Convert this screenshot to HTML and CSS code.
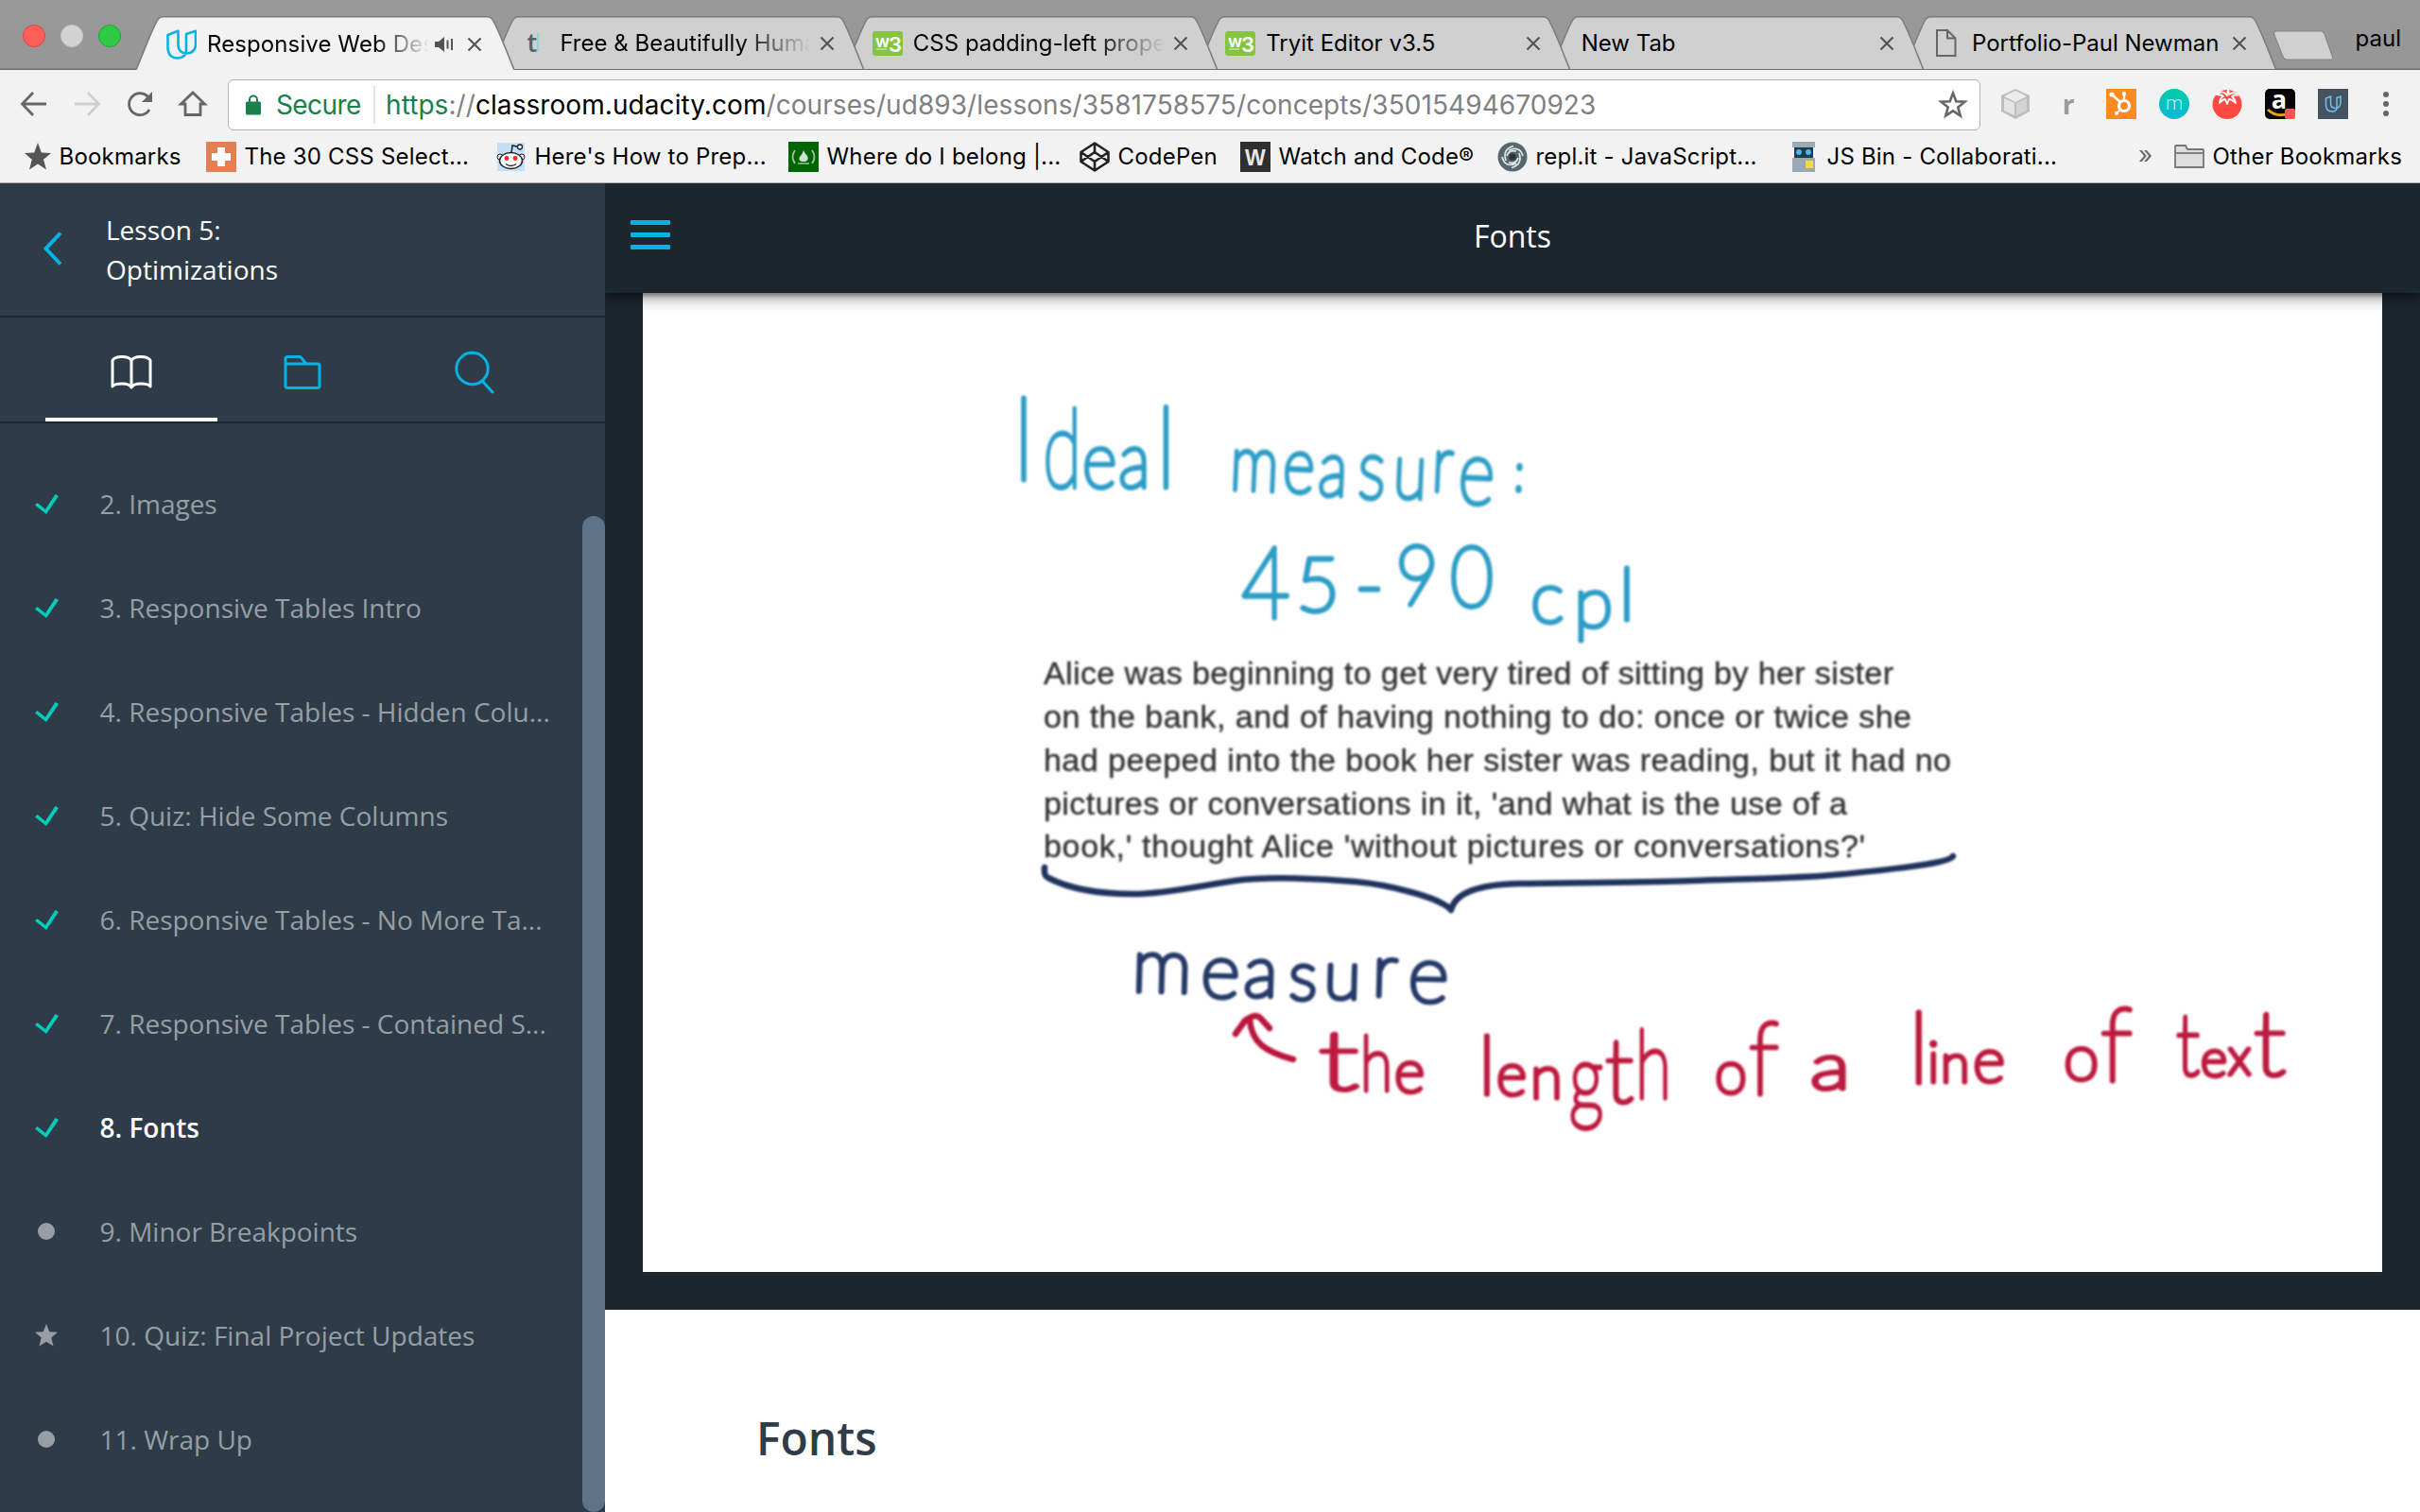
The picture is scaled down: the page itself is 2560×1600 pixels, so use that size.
FILE: index.html
```html
<!DOCTYPE html>
<html lang="en">
<head>
<meta charset="utf-8">
<title>Fonts - Responsive Web Design</title>
<link rel="stylesheet" href="styles.css">
</head>
<body>
<svg class="defs" width="0" height="0" aria-hidden="true">
  <symbol id="tab-shape" viewBox="0 0 400 57"><path class="tab-fill" d="M0 57C4 48 20 5 24 2.500Q25.500 .8 29 .8H371Q374.500 .8 376 2.500C380 5 396 48 400 57Z"/><path class="tab-line" d="M0 57C4 48 20 5 24 2.500Q25.500 .8 29 .8H371Q374.500 .8 376 2.500C380 5 396 48 400 57" fill="none"/></symbol>
  <symbol id="close" viewBox="0 0 16 16"><path d="M1.500 1.500l13 13M14.500 1.500l-13 13" stroke="#555" stroke-width="2.200" fill="none"/></symbol>
  <symbol id="check" viewBox="0 0 25 21"><path d="M0 11.500l2.500-2.500 8.500 7L21.500 0 25 2 12 21z" fill="#02ccba"/></symbol>
</svg>

<header class="browser">
  <div class="strip">
    <div class="lights"><i class="red"></i><i class="grey"></i><i class="green"></i></div>
    <div class="tabs">
      <div class="tab active"><svg class="shape"><use href="#tab-shape"/></svg>
        <svg class="fav" viewBox="0 0 32 32" fill="none" stroke="#02b3e4" stroke-width="2.600" stroke-linejoin="round"><path d="M12.500 19V1.800L1.500 6v13.500Q2 30.500 12 30.500 21 30 21 22V5l10-3.200V17q-1 8.500-10 8.500M12.500 17q.5 8 8.500 8.500"/></svg>
        <span class="title t-short">Responsive Web Des</span>
        <svg class="sound" viewBox="0 0 20 16"><path d="M0 5h4l6-5v16l-6-5H0z" fill="#555"/><path d="M13.500 3.500v9M18 2v12" stroke="#555" stroke-width="2"/></svg>
        <svg class="x"><use href="#close"/></svg></div>
      <div class="tab"><svg class="shape"><use href="#tab-shape"/></svg>
        <span class="fav tt">t<b></b></span>
        <span class="title fade">Free &amp; Beautifully Huma</span><svg class="x"><use href="#close"/></svg></div>
      <div class="tab"><svg class="shape"><use href="#tab-shape"/></svg>
        <svg class="fav" viewBox="0 -3 32 32"><rect width="32" height="26" rx="3" fill="#86c440"/><text y="17" font-family="Inter" font-size="18" font-weight="600" fill="#fff"><tspan x="3">w</tspan><tspan x="17" y="21.500" font-size="22">3</tspan></text><path d="M4 19h11" stroke="#c5e39f" stroke-width="1.500"/></svg>
        <span class="title fade">CSS padding-left prope</span><svg class="x"><use href="#close"/></svg></div>
      <div class="tab"><svg class="shape"><use href="#tab-shape"/></svg>
        <svg class="fav" viewBox="0 -3 32 32"><rect width="32" height="26" rx="3" fill="#86c440"/><text y="17" font-family="Inter" font-size="18" font-weight="600" fill="#fff"><tspan x="3">w</tspan><tspan x="17" y="21.500" font-size="22">3</tspan></text><path d="M4 19h11" stroke="#c5e39f" stroke-width="1.500"/></svg>
        <span class="title">Tryit Editor v3.5</span><svg class="x"><use href="#close"/></svg></div>
      <div class="tab bare"><svg class="shape"><use href="#tab-shape"/></svg>
        <span class="title">New Tab</span><svg class="x"><use href="#close"/></svg></div>
      <div class="tab"><svg class="shape"><use href="#tab-shape"/></svg>
        <svg class="fav" viewBox="0 0 32 32" fill="none" stroke="#666" stroke-width="2"><path d="M6 2h11l8.500 8.500V29H6zM17 2v8.500h8.500"/></svg>
        <span class="title">Portfolio-Paul Newman</span><svg class="x"><use href="#close"/></svg></div>
    </div>
    <svg class="newtab" viewBox="0 0 66 33"><path d="M4 1h47q3 0 4 3l8.500 24q1 3-2 3H15q-3 0-4-3L1.500 4Q1 1 4 1z" fill="#d0d0d0" stroke="#868686" stroke-width="1.200"/></svg>
    <span class="user">paul</span>
  </div>

  <div class="toolbar">
    <nav class="nav">
      <svg viewBox="0 0 32 32" fill="none" stroke="#666" stroke-width="2.800"><path d="M29 16H4M15 4L3.500 16 15 28"/></svg>
      <svg viewBox="0 0 32 32" fill="none" stroke="#d0d0d0" stroke-width="2.800"><path d="M3 16h25M17 4l11.500 12L17 28"/></svg>
      <svg viewBox="0 0 32 32" fill="none" stroke="#666" stroke-width="2.800"><path d="M26 22a11.500 11.500 0 1 1-1-13"/><path d="M29 3v11H18z" fill="#666" stroke="none"/></svg>
      <svg viewBox="0 0 32 32" fill="none" stroke="#666" stroke-width="2.800"><path d="M3.500 16L16 4l12.500 12H24v11.500H8V16z"/></svg>
    </nav>
    <div class="omnibox">
      <svg class="lock" viewBox="0 0 16 22"><path d="M4 9V5.500a4 4 0 0 1 8 0V9" fill="none" stroke="#188048" stroke-width="2"/><rect y="7.500" width="16" height="14" rx="1.500" fill="#188048"/></svg>
      <span class="secure">Secure</span><i class="bar"></i>
      <span class="url"><span class="scheme">https</span>://<span class="host">classroom.udacity.com</span>/courses/ud893/lessons/3581758575/concepts/35015494670923</span>
      <svg class="fave" viewBox="0 0 32 32"><path d="M16 3.500l3.300 8.800 9.200.4-7.200 5.800 2.500 9L16 22.400l-7.800 5.100 2.500-9-7.200-5.800 9.200-.4z" fill="none" stroke="#666" stroke-width="2.600"/></svg>
    </div>
    <div class="exts">
      <svg viewBox="0 0 32 32"><path d="M16 0l15 7v17l-15 8-15-8V7z" fill="#bdbdbd"/><path d="M16 2l12 6-12 6L4 8z" fill="#ececec"/><path d="M4 10l11 5v13L4 23z" fill="#e4e4e4"/><path d="M28 10l-11 5v13l11-5z" fill="#d4d4d4"/></svg>
      <span class="r">r</span>
      <svg viewBox="0 0 32 32"><rect width="32" height="32" fill="#f98b20"/><circle cx="19" cy="18" r="5.500" fill="none" stroke="#fff" stroke-width="3.200"/><path d="M19 12V6M15 14L6 6M15 22l-4 4" stroke="#fff" stroke-width="2.400"/><circle cx="19" cy="5" r="2.200" fill="#fff"/><circle cx="6" cy="6" r="2.600" fill="#fff"/><circle cx="11" cy="26" r="2" fill="#fff"/></svg>
      <svg viewBox="0 0 32 32"><defs><linearGradient id="mg" x1="0" y1="0" x2="0" y2="1"><stop offset="0" stop-color="#00cba8"/><stop offset="1" stop-color="#0cb8d8"/></linearGradient></defs><circle cx="16" cy="16" r="16" fill="url(#mg)"/><text x="16" y="21.500" text-anchor="middle" font-family="Open Sans" font-weight="300" font-size="21" fill="#d9fbf8">m</text></svg>
      <svg viewBox="0 0 32 32"><circle cx="16" cy="16.500" r="15.500" fill="#ff4a43"/><path d="M16 7C11 1 8 4 5 6q5 0 7 2-4 2-4 7 3-4 6-4l2 5 2-5q3 0 7 4-1-5-4-7 3-2 6-1-3-5-9-1l-1-6z" fill="none" stroke="#fff" stroke-width="1.800" stroke-linejoin="round"/></svg>
      <svg viewBox="0 0 32 32"><rect width="32" height="32" rx="5" fill="#050505"/><text x="15" y="21" text-anchor="middle" font-family="Open Sans" font-weight="700" font-size="27" fill="#fff">a</text><path d="M3 22q10 9 21 4" fill="none" stroke="#e8a31c" stroke-width="3"/><rect x="21" y="21" width="11" height="11" rx="2" fill="#ff5252"/></svg>
      <svg viewBox="0 0 32 32"><rect width="32" height="32" fill="#455260"/><path d="M13.500 17V8L8.500 10v7q0 7 6.500 7 5 0 5-5V9.500L24 8v7q-.5 5-5 5.500M13.500 16q0 4 5 4.500" fill="none" stroke="#6cc4ea" stroke-width="1.500"/></svg>
      <svg viewBox="0 0 32 32" fill="#666"><circle cx="16" cy="6" r="3"/><circle cx="16" cy="16" r="3"/><circle cx="16" cy="26" r="3"/></svg>
    </div>
  </div>

  <div class="bookmarks">
    <span class="bm"><svg viewBox="0 0 32 32"><path d="M18 1l3.800 10.500 10.200.5-8 6.700L27 29.500l-9-6-9 6 2.800-10.800L4 12l10.200-.5z" fill="#555"/></svg>Bookmarks</span>
    <span class="bm"><svg viewBox="0 0 32 32"><rect width="32" height="32" fill="#e57f51"/><path d="M12 6h8v6h6v8h-6v6h-8v-6H6v-8h6z" fill="#fff"/></svg>The 30 CSS Select...</span>
    <span class="bm"><svg viewBox="0 0 32 32"><rect x="1" y="1" width="29" height="30" fill="#c5dff8"/><path d="M16 12l1-8 7 1.500" fill="none" stroke="#222" stroke-width="1.500"/><circle cx="25" cy="5.500" r="2.500" fill="#fff" stroke="#222" stroke-width="1.300"/><circle cx="4" cy="16" r="3" fill="#fff" stroke="#222"/><circle cx="27" cy="16" r="3" fill="#fff" stroke="#222"/><ellipse cx="15.500" cy="20" rx="12" ry="8.500" fill="#fff" stroke="#222" stroke-width="1.500"/><circle cx="11" cy="17.500" r="2.400" fill="#f22"/><circle cx="20" cy="17.500" r="2.400" fill="#f22"/><path d="M10 23.500q5.500 4 11 0" fill="none" stroke="#222" stroke-width="1.400"/></svg>Here's How to Prep...</span>
    <span class="bm"><svg viewBox="0 0 32 32"><rect width="32" height="32" fill="#006400"/><path d="M7 9q-5 7 0 14M25 9q5 7 0 14" fill="none" stroke="#9cc79c" stroke-width="1.800"/><path d="M16 9q1 3 4 6 2 4-2 6h-4q-4-2-2-5 3-3 4-7z" fill="#cfe3cf"/><path d="M10 23h12" stroke="#9cc79c" stroke-width="1.500"/></svg>Where do I belong |...</span>
    <span class="bm"><svg viewBox="0 0 32 32" fill="none" stroke="#222" stroke-width="2.600" stroke-linejoin="round"><path d="M16 1.500l14.500 9.500v10L16 30.500 1.500 21V11zM1.500 11L16 21l14.500-10M1.500 21L16 11l14.500 10M16 1.500V11M16 21v9.500"/></svg>CodePen</span>
    <span class="bm"><svg viewBox="0 0 32 32"><rect width="32" height="32" fill="#2f2f2f"/><text x="16" y="24.500" text-anchor="middle" font-family="Liberation Sans" font-weight="700" font-size="23" fill="#e8e8e8">W</text></svg>Watch and Code®</span>
    <span class="bm"><svg viewBox="0 0 32 32"><circle cx="16" cy="16" r="15.500" fill="#56686f"/><circle cx="16" cy="16" r="3.800" fill="#333"/><g fill="none" stroke="#dfe6e8" stroke-width="1.700"><path d="M9 20Q5 8 17 4.500M12 9q12-5 15 6M23 12q4 12-8 15.500M20 23Q8 28 5 16M10 15q2-7 10-5M22 17q-2 7-10 5"/></g></svg>repl.it - JavaScript...</span>
    <span class="bm"><svg viewBox="0 0 32 32"><path d="M4 0h24v6H4z" fill="#9aa9b2"/><path d="M6 6h20v11H6z" fill="#1f3a48"/><circle cx="11" cy="11" r="3" fill="#46b7ee"/><circle cx="21" cy="11" r="3" fill="#46b7ee"/><path d="M4 17h24v15H4z" fill="#9aa9b2"/><path d="M18 20h8v8h-8z" fill="#f4db3e"/></svg>JS Bin - Collaborati...</span>
    <span class="more">»</span>
    <span class="bm"><svg viewBox="0 0 32 32"><path d="M1 27V5q0-1 1-1h10l2 4h16q1 0 1 1v18z" fill="#ddd" stroke="#777" stroke-width="1.800"/><path d="M1 12h30" stroke="#777" stroke-width="1.800"/></svg>Other Bookmarks</span>
  </div>
</header>

<div class="app">
  <aside class="sidebar">
    <div class="lesson">
      <svg class="back" viewBox="0 0 20 36"><path d="M18 1.500L2.500 18 18 34.500" fill="none" stroke="#02b3e4" stroke-width="4"/></svg>
      <p>Lesson 5:<br>Optimizations</p>
    </div>
    <div class="panes">
      <a class="on"><svg width="44" height="36" viewBox="0 0 44 36" fill="none" stroke="#fff" stroke-width="3" stroke-linejoin="round"><path d="M22 5.500Q20 1.500 12 1.500T2 5.500V33Q4 30 12 30t10 4q2-4 10-4t10 3V5.500Q40 1.500 32 1.500T22 5.500zV34"/></svg></a>
      <a><svg width="40" height="36" viewBox="0 0 40 36" fill="none" stroke="#02b3e4" stroke-width="3" stroke-linejoin="round"><path d="M2 9V3.500q0-2 2-2h13q1 0 2 1.500L24 9h12q2 0 2 2v21.500q0 2-2 2H4q-2 0-2-2V9h22"/></svg></a>
      <a><svg width="42" height="46" viewBox="0 0 42 46" fill="none" stroke="#02b3e4" stroke-width="3" stroke-linecap="round"><circle cx="18.500" cy="19" r="16.700"/><path d="M29 32l11 12"/></svg></a>
    </div>
    <div class="scroller">
      <ul class="concepts">
        <li><svg class="mark"><use href="#check"/></svg><span>2. Images</span></li>
        <li><svg class="mark"><use href="#check"/></svg><span>3. Responsive Tables Intro</span></li>
        <li><svg class="mark"><use href="#check"/></svg><span>4. Responsive Tables - Hidden Colu...</span></li>
        <li><svg class="mark"><use href="#check"/></svg><span>5. Quiz: Hide Some Columns</span></li>
        <li><svg class="mark"><use href="#check"/></svg><span>6. Responsive Tables - No More Ta...</span></li>
        <li><svg class="mark"><use href="#check"/></svg><span>7. Responsive Tables - Contained S...</span></li>
        <li class="current"><svg class="mark"><use href="#check"/></svg><span>8. Fonts</span></li>
        <li><i class="dot"></i><span>9. Minor Breakpoints</span></li>
        <li><svg class="mark star" viewBox="0 0 24 24"><path d="M12 0l3.300 8.300 8.700.5-6.700 5.700L19.500 23.500 12 18.800 4.500 23.500l2.200-9L0 8.800l8.700-.5z" fill="#979ea4"/></svg><span>10. Quiz: Final Project Updates</span></li>
        <li><i class="dot"></i><span>11. Wrap Up</span></li>
      </ul>
      <div class="thumb"></div>
    </div>
  </aside>

  <main class="main">
    <div class="topbar">
      <div class="burger"><i></i><i></i><i></i></div>
      <h1>Fonts</h1>
    </div>
    <div class="stage">
      <svg class="video" viewBox="680 310 1840 1036">
        <g class="pen teal">
          <text transform="translate(1070 514) scale(.85 1)" font-size="80"><tspan x="0" font-size="125" y="-6">I</tspan><tspan x="39" y="2" font-size="116" textLength="48" lengthAdjust="spacingAndGlyphs">d</tspan><tspan x="88" y="2" font-size="84">e</tspan><tspan x="133" y="2" font-size="84">a</tspan><tspan x="180" y="2" font-size="118">l</tspan></text>
          <text transform="translate(1300 518) rotate(2.500) scale(.78 1)" font-size="84"><tspan x="0">m</tspan><tspan x="72">e</tspan><tspan x="120" y="2">a</tspan><tspan x="174" y="3" font-size="90">s</tspan><tspan x="222" y="1">u</tspan><tspan x="274" y="-8">r</tspan><tspan x="310" y="4" font-size="96">e</tspan><tspan x="386" y="-12" font-size="56">:</tspan></text>
          <text font-size="90"><tspan x="1313" y="654" font-size="106" textLength="52" lengthAdjust="spacingAndGlyphs">4</tspan><tspan x="1371" y="647" font-size="80">5</tspan><tspan x="1433" y="648" font-size="84">-</tspan><tspan x="1476" y="640" font-size="88" textLength="46" lengthAdjust="spacingAndGlyphs">9</tspan><tspan x="1534" y="642" textLength="46" lengthAdjust="spacingAndGlyphs">0</tspan></text>
          <text font-size="76"><tspan x="1619" y="659">c</tspan><tspan x="1665" y="664">p</tspan><tspan x="1713" y="656">l</tspan></text>
        </g>
        <g class="print">
          <text x="1104" y="724" textLength="899">Alice was beginning to get very tired of sitting by her sister</text>
          <text x="1104" y="770" textLength="918">on the bank, and of having nothing to do: once or twice she</text>
          <text x="1104" y="816" textLength="960">had peeped into the book her sister was reading, but it had no</text>
          <text x="1104" y="862" textLength="850">pictures or conversations in it, 'and what is the use of a</text>
          <text x="1104" y="907" textLength="869">book,' thought Alice 'without pictures or conversations?'</text>
        </g>
        <path class="ink" stroke="#20335e" d="M1105 918Q1104 927 1109 929C1134 942 1165 946 1199 946S1270 937 1306 932 1400 930 1434 933 1525 950 1535 963C1539 946 1560 936 1608 935S1740 934 1789 932 1900 930 1950 925 2062 914 2066 906"/>
        <g class="pen navy">
          <text transform="translate(1197 1049) rotate(1.500)" font-size="72"><tspan x="0" font-size="80">m</tspan><tspan x="73" y="4" font-size="80">e</tspan><tspan x="118" y="2" font-size="76">a</tspan><tspan x="166" y="4">s</tspan><tspan x="203" y="2">u</tspan><tspan x="254" y="-2" font-size="78">r</tspan><tspan x="292" y="3" font-size="84">e</tspan></text>
        </g>
        <path class="ink" stroke="#b9163c" d="M1307 1094L1317 1080Q1328 1072 1333 1077L1343 1088M1322 1079C1324 1103 1338 1113 1368 1121"/>
        <g class="pen red">
          <text font-size="68"><tspan x="1395" y="1153" font-size="86" textLength="42" lengthAdjust="spacingAndGlyphs">t</tspan><tspan x="1439" y="1154" font-size="80" textLength="34" lengthAdjust="spacingAndGlyphs">h</tspan><tspan x="1475" y="1156" font-size="62">e</tspan></text>
          <text font-size="62"><tspan x="1564" y="1158" font-size="86">l</tspan><tspan x="1583" y="1159">e</tspan><tspan x="1619" y="1162">n</tspan><tspan x="1660" y="1176" font-size="100" textLength="36" lengthAdjust="spacingAndGlyphs">g</tspan><tspan x="1698" y="1166" font-size="94" textLength="30" lengthAdjust="spacingAndGlyphs">t</tspan><tspan x="1730" y="1162" font-size="100" textLength="38" lengthAdjust="spacingAndGlyphs">h</tspan></text>
          <text><tspan x="1814" y="1157" font-size="64" textLength="34" lengthAdjust="spacingAndGlyphs">o</tspan><tspan x="1850" y="1158" font-size="106" textLength="32" lengthAdjust="spacingAndGlyphs">f</tspan></text>
          <text x="1915" y="1152" font-size="68" textLength="42" lengthAdjust="spacingAndGlyphs">a</text>
          <text font-size="56"><tspan x="2019" y="1146" font-size="104">l</tspan><tspan x="2039" y="1145" font-size="60">i</tspan><tspan x="2053" y="1145">n</tspan><tspan x="2087" y="1145" font-size="66">e</tspan></text>
          <text><tspan x="2183" y="1143" font-size="68">o</tspan><tspan x="2222" y="1144" font-size="108" textLength="34" lengthAdjust="spacingAndGlyphs">f</tspan></text>
          <text font-size="60"><tspan x="2302" y="1138" font-size="92" textLength="25" lengthAdjust="spacingAndGlyphs">t</tspan><tspan x="2328" y="1139" font-size="54">e</tspan><tspan x="2357" y="1137" font-size="54">x</tspan><tspan x="2384" y="1138" font-size="96" textLength="34" lengthAdjust="spacingAndGlyphs">t</tspan></text>
        </g>
      </svg>
    </div>
    <section class="notes"><h2>Fonts</h2></section>
  </main>
</div>
</body>
</html>
```

FILE: styles.css
```css
* { box-sizing: border-box; }
body { margin: 0; width: 2560px; height: 1600px; overflow: hidden; font-family: "Open Sans", sans-serif; background: #fff; }
.defs { position: absolute; }

/* browser chrome */
.browser { height: 194px; background: #f2f2f2; border-bottom: 1px solid #aaa; font-family: Inter, sans-serif; color: #000; }
.strip { height: 74px; display: flex; align-items: flex-end; background: linear-gradient(#999, #979797 72px, #6c6c6c 73px); }
.lights { width: 144px; height: 74px; padding: 2px 0 0 24px; display: flex; align-items: center; gap: 16px; }
.lights i { width: 24px; height: 24px; border-radius: 50%; border: 1px solid; }
.lights .red { background: #ff5f58; border-color: #e0443e; }
.lights .grey { background: #d3d3d3; border-color: #c4c4c4; }
.lights .green { background: #2fcb46; border-color: #1fa833; }
.tabs { display: flex; }
.tab { position: relative; width: 400px; height: 57px; margin-right: -26.600px; padding: 2px 34px 0 32px; display: flex; align-items: center; z-index: 1; }
.tab:nth-child(1) { z-index: 6; } .tab:nth-child(2) { z-index: 5; } .tab:nth-child(3) { z-index: 4; }
.tab:nth-child(4) { z-index: 3; } .tab:nth-child(5) { z-index: 2; }
.shape { position: absolute; left: 0; top: 0; width: 400px; height: 57px; z-index: -1; fill: #d0d0d0; stroke: #7b7b7b; }
.tab:not(.active) { border-bottom: 1px solid #6c6c6c; }
.tab:not(.active) .shape { height: 56px; }
.tab.active .shape { fill: #f2f2f2; }
.tab-fill { stroke: none; }
.tab-line { stroke-width: 1.500px; }
.fav { width: 32px; height: 32px; flex: none; }
.tt { padding-left: 8px; font: 600 27px/30px "Open Sans"; color: #58606c; }
.tt b { display: inline-block; width: 2px; height: 20px; background: #8fd6d0; }
.title { flex: 1; min-width: 0; margin-left: 11px; font-size: 24px; line-height: 32px; white-space: nowrap; }
.bare .title { margin-left: 3px; }
.fade { margin-right: 4px; mask-image: linear-gradient(to right, #000 70%, transparent 98%); }
.t-short { margin-right: 6px; letter-spacing: .1px; mask-image: linear-gradient(to right, #000 75%, transparent); }
.sound { flex: none; width: 20px; height: 16px; margin-right: 14px; }
.x { width: 16px; height: 16px; flex: none; }
.newtab { width: 66px; height: 33px; margin: 0 0 9px 20px; }
.user { margin: 0 0 18px 21px; font-size: 24px; line-height: 30px; letter-spacing: .1px; }
.toolbar { height: 72px; display: flex; align-items: center; }
.nav { width: 241px; padding-left: 20px; display: flex; gap: 24px; }
.nav svg, .exts svg { width: 32px; height: 32px; }
.omnibox { width: 1854px; height: 54px; margin-top: 1px; border: 1.500px solid #b2b2b2; border-radius: 6px; background: #fff; display: flex; align-items: center; padding: 0 12px 0 18px; font-size: 28px; white-space: nowrap; }
.lock { width: 16px; height: 22px; margin-right: 16px; }
.secure { width: 103px; color: #188048; letter-spacing: -.6px; }
.bar { width: 2px; height: 40px; background: #e3e3e3; }
.url { flex: 1; margin-left: 11px; color: #808080; letter-spacing: .07px; }
.scheme { color: #188048; }
.host { color: #000; }
.fave { width: 32px; height: 32px; }
.exts { margin-left: 21px; display: flex; align-items: center; gap: 24px; }
.r { width: 32px; text-align: center; font: 700 28px/32px "Open Sans"; color: #9a9a9a; }
.bookmarks { height: 39px; display: grid; grid-template-columns: 196px 307px 309px 308px 170px 272px 308px 370px 38px 1fr; padding-left: 22px; align-items: center; }
.bm { display: flex; align-items: center; gap: 8.500px; font-size: 24px; letter-spacing: .2px; white-space: nowrap; }
.bm svg { width: 32px; height: 32px; flex: none; }
.more { font-size: 26px; color: #666; padding-bottom: 4px; }

/* classroom */
.app { display: flex; height: 1406px; }
.sidebar { width: 640px; background: #2e3c49; display: flex; flex-direction: column; }
.lesson { height: 142px; border-bottom: 2px solid #1d262e; display: flex; align-items: center; padding: 0 0 2px 46px; }
.back { width: 20px; height: 36px; margin-right: 46px; }
.lesson p { margin: 0; padding-top: 2px; font-size: 28px; line-height: 42px; color: #fff; }
.panes { height: 112px; border-bottom: 2px solid #1d262e; padding-left: 48px; display: flex; }
.panes a { width: 181.500px; padding-top: 9px; display: flex; align-items: center; justify-content: center; border-bottom: 4px solid transparent; }
.panes .on { border-color: #fff; }
.scroller { flex: 1; display: flex; }
.concepts { list-style: none; flex: 1; margin: 0; padding: 30px 0 0; }
.concepts li { height: 110px; padding-left: 36.500px; display: flex; align-items: center; font-size: 28px; color: #979ea4; white-space: nowrap; }
.mark { width: 25px; height: 21px; margin-right: 44px; }
.star { width: 24px; height: 24px; margin-right: 45px; }
.dot { width: 18px; height: 18px; border-radius: 50%; background: #979ea4; margin: 0 48px 0 3px; }
.concepts .current { color: #fff; font-weight: 600; }
.thumb { width: 24px; margin-top: 98px; background: #5f7387; border-radius: 12px; }
.main { flex: 1; display: flex; flex-direction: column; background: #1c262f; overflow: hidden; }
.topbar { position: relative; z-index: 1; height: 116px; background: #1c262f; box-shadow: 0 4px 16px rgba(0, 0, 0, .45), 0 2px 6px rgba(0, 0, 0, .4); display: flex; align-items: center; }
.burger { width: 69px; padding-left: 27px; display: flex; flex-direction: column; gap: 8px; margin-bottom: 7px; }
.burger i { width: 42px; height: 5px; background: #02b3e4; border-radius: 1px; }
.topbar h1 { flex: 1; margin: 0 69px 4px 0; text-align: center; font-size: 32px; line-height: 40px; font-weight: 400; color: #fff; }
.stage { padding: 0 40px 40px; height: 1076px; }
.video { display: block; width: 1840px; height: 1036px; background: #fefefe; }
.video g, .video .ink { filter: blur(.8px); }
.ink { fill: none; stroke-width: 6.500px; stroke-linecap: round; stroke-linejoin: round; }
.pen { font-family: Lato, sans-serif; font-weight: 100; stroke-width: 5px; stroke-linejoin: round; }
.teal { fill: #2d9dc6; stroke: #2d9dc6; }
.navy { fill: #253a68; stroke: #253a68; }
.pen.red { fill: #bd1a40; stroke: #bd1a40; }
.print { fill: #333; stroke: #333; stroke-width: .4px; font: 34px "Liberation Sans", sans-serif; }
.notes { flex: 1; background: #fff; padding: 102px 0 0 160px; }
.notes h2 { margin: 0; font-size: 48px; line-height: 68px; font-weight: 600; color: #2e3d49; }
```
